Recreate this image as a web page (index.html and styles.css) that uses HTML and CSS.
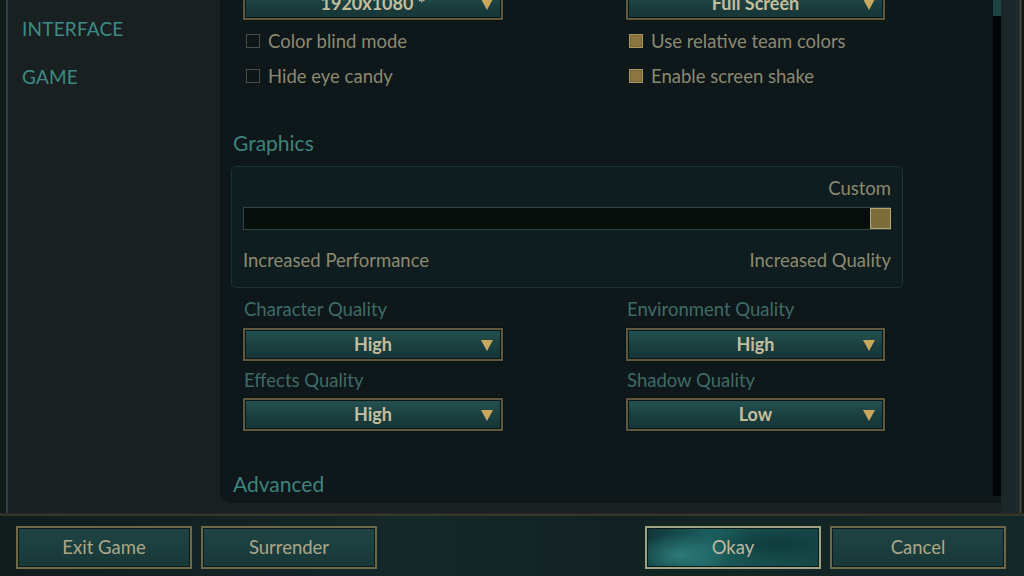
FILE: index.html
```html
<!DOCTYPE html>
<html>
<head>
<meta charset="utf-8">
<link rel="stylesheet" href="styles.css">
</head>
<body>
<div class="window">
  <div class="main">
    <div class="edge-left"></div>
    <nav class="sidebar">
      <div class="nav-item">INTERFACE</div>
      <div class="nav-item">GAME</div>
    </nav>
    <div class="content-wrap">
      <section class="content">
        <div class="grid top-row">
          <div class="col">
            <div class="select"><span>1920x1080 *</span><i class="arrow"></i></div>
            <label class="check"><span class="box"></span>Color blind mode</label>
            <label class="check"><span class="box"></span>Hide eye candy</label>
          </div>
          <div class="col">
            <div class="select"><span>Full Screen</span><i class="arrow"></i></div>
            <label class="check"><span class="box on"></span>Use relative team colors</label>
            <label class="check"><span class="box on"></span>Enable screen shake</label>
          </div>
        </div>
        <h2 class="heading gfx">Graphics</h2>
        <div class="preset">
          <div class="preset-name">Custom</div>
          <div class="slider"><div class="thumb"></div></div>
          <div class="slider-labels"><span>Increased Performance</span><span>Increased Quality</span></div>
        </div>
        <div class="grid quality">
          <div class="col">
            <div class="field-label">Character Quality</div>
            <div class="select"><span>High</span><i class="arrow"></i></div>
            <div class="field-label">Effects Quality</div>
            <div class="select"><span>High</span><i class="arrow"></i></div>
          </div>
          <div class="col">
            <div class="field-label">Environment Quality</div>
            <div class="select"><span>High</span><i class="arrow"></i></div>
            <div class="field-label">Shadow Quality</div>
            <div class="select"><span>Low</span><i class="arrow"></i></div>
          </div>
        </div>
        <h2 class="heading adv">Advanced</h2>
      </section>
      <div class="scrollbar"><div class="sb-thumb"></div></div>
    </div>
    <div class="edge-right"></div>
  </div>
  <div class="divider"></div>
  <footer class="footer">
    <div class="btn-group">
      <button class="btn">Exit Game</button>
      <button class="btn">Surrender</button>
    </div>
    <div class="btn-group">
      <button class="btn primary">Okay</button>
      <button class="btn">Cancel</button>
    </div>
  </footer>
</div>
</body>
</html>
```
FILE: styles.css
```css
* { box-sizing: border-box; }
html, body { margin: 0; padding: 0; }
body {
  width: 1024px;
  height: 576px;
  overflow: hidden;
  background: #0d1416;
  font-family: Lato, "Open Sans", sans-serif;
}
.window {
  display: flex;
  flex-direction: column;
  height: 576px;
}
.main {
  display: flex;
  height: 513px;
  background: #182022;
}
.edge-left {
  width: 8px;
  background: #111a1c;
  border-left: 5px solid #121a1b;
  border-right: 2px solid #2a4244;
}
.sidebar {
  width: 212px;
  padding: 18px 0 0 14px;
  display: flex;
  flex-direction: column;
  gap: 27px;
}
.nav-item {
  color: #3e8a84;
  font-size: 19px;
  line-height: 21px;
  letter-spacing: 0.2px;
}
.content-wrap {
  width: 781px;
  height: 503px;
  display: flex;
  background: #0e1719;
  border-bottom-left-radius: 12px;
  overflow: hidden;
}
.content {
  flex: 1;
  padding: 0 0 0 13px;
}
.grid {
  display: grid;
  grid-template-columns: 260px 259px;
  column-gap: 123px;
  padding-left: 10px;
}
.top-row { margin-top: -13px; }
.col { display: flex; flex-direction: column; }
.select {
  position: relative;
  height: 33px;
  border: 2px solid #5f5a3f;
  box-shadow: inset 0 0 0 1px #0b1717, 0 0 0 1px #0a1212;
  background: linear-gradient(#245250, #1a3d3e 60%, #163536);
  display: flex;
  align-items: center;
  justify-content: center;
  color: #c4be9d;
  font-size: 18px;
  font-weight: 700;
}
.select span { padding-bottom: 1px; }
.arrow {
  position: absolute;
  right: 8px;
  top: 10px;
  width: 0;
  height: 0;
  border-left: 6px solid transparent;
  border-right: 6px solid transparent;
  border-top: 11px solid #c9a85e;
}
.check {
  display: flex;
  align-items: center;
  gap: 8px;
  height: 35px;
  padding-left: 3px;
  color: #8c8971;
  font-size: 18.5px;
  line-height: 20px;
}
.top-row .select + .check { margin-top: 3px; }
.box {
  width: 14px;
  height: 14px;
  border: 1px solid #4a4d45;
  background: #0e1618;
}
.box.on {
  background: #8b7643;
  border-color: #a99659;
  box-shadow: inset 0 0 2px #5b4a26;
}
.heading {
  margin: 0;
  font-weight: 400;
  color: #3f837d;
  font-size: 21px;
  line-height: 24px;
}
.gfx { margin-top: 38px; margin-bottom: 11px; }
.preset {
  width: 672px;
  height: 122px;
  margin-left: -2px;
  border: 1px solid #1b3335;
  border-radius: 5px;
  background: #0f1d20;
  padding: 10px 11px 0 11px;
}
.preset-name {
  text-align: right;
  color: #8b8a6f;
  font-size: 18.5px;
  line-height: 22px;
  height: 30px;
}
.slider {
  position: relative;
  height: 23px;
  border: 1px solid #33443a;
  background: #060e0b;
}
.thumb {
  position: absolute;
  right: -1px;
  top: 0;
  width: 21px;
  height: 21px;
  background: #7d6c3c;
  border: 1px solid #b6a876;
}
.slider-labels {
  display: flex;
  justify-content: space-between;
  margin-top: 19px;
  color: #8b8a6f;
  font-size: 18.5px;
  line-height: 22px;
}
.quality { margin-top: 6px; }
.field-label {
  color: #3f6b67;
  font-size: 18.5px;
  line-height: 22px;
  height: 34px;
  padding-top: 4px;
  padding-left: 1px;
}
.quality .select + .field-label { height: 37px; padding-top: 8px; }
.adv { margin-top: 41px; padding-left: 0; }
.scrollbar {
  width: 8px;
  height: 496px;
  background: #020505;
  align-self: flex-start;
}
.sb-thumb {
  height: 16px;
  background: #1d4344;
}
.edge-right {
  flex: 1;
  background: linear-gradient(90deg, #1b2527, #1e2a2c 80%, #4e4a30 82%, #4e4a30 88%, #0f1618 90%);
}
.divider {
  height: 3px;
  background: #363529;
  border-top: 1px solid #2a2c24;
}
.footer {
  flex: 1;
  display: flex;
  justify-content: space-between;
  padding: 10px 18px 0 16px;
  background: linear-gradient(90deg, #111c1d, #15282a 40%, #122223 60%, #152829);
}
.btn-group { display: flex; gap: 9px; }
.btn {
  width: 176px;
  height: 43px;
  border: 2px solid #6d6848;
  box-shadow: inset 0 0 0 1px #0c1a1a;
  background: linear-gradient(#1f4444, #193838);
  color: #ada787;
  font-family: Lato, "Open Sans", sans-serif;
  font-size: 18.5px;
  padding: 0 0 2px 0;
}
.btn.primary {
  border-color: #9ea184;
  color: #bdb9a0;
  background:
    radial-gradient(ellipse 50px 22px at 20% 70%, #2c7a78 0%, rgba(44,122,120,0) 100%),
    radial-gradient(ellipse 60px 18px at 75% 40%, #0f3a3c 0%, rgba(15,58,60,0) 100%),
    linear-gradient(100deg, #103638 0%, #1c5e5e 35%, #17504f 60%, #164646 100%);
}
```
